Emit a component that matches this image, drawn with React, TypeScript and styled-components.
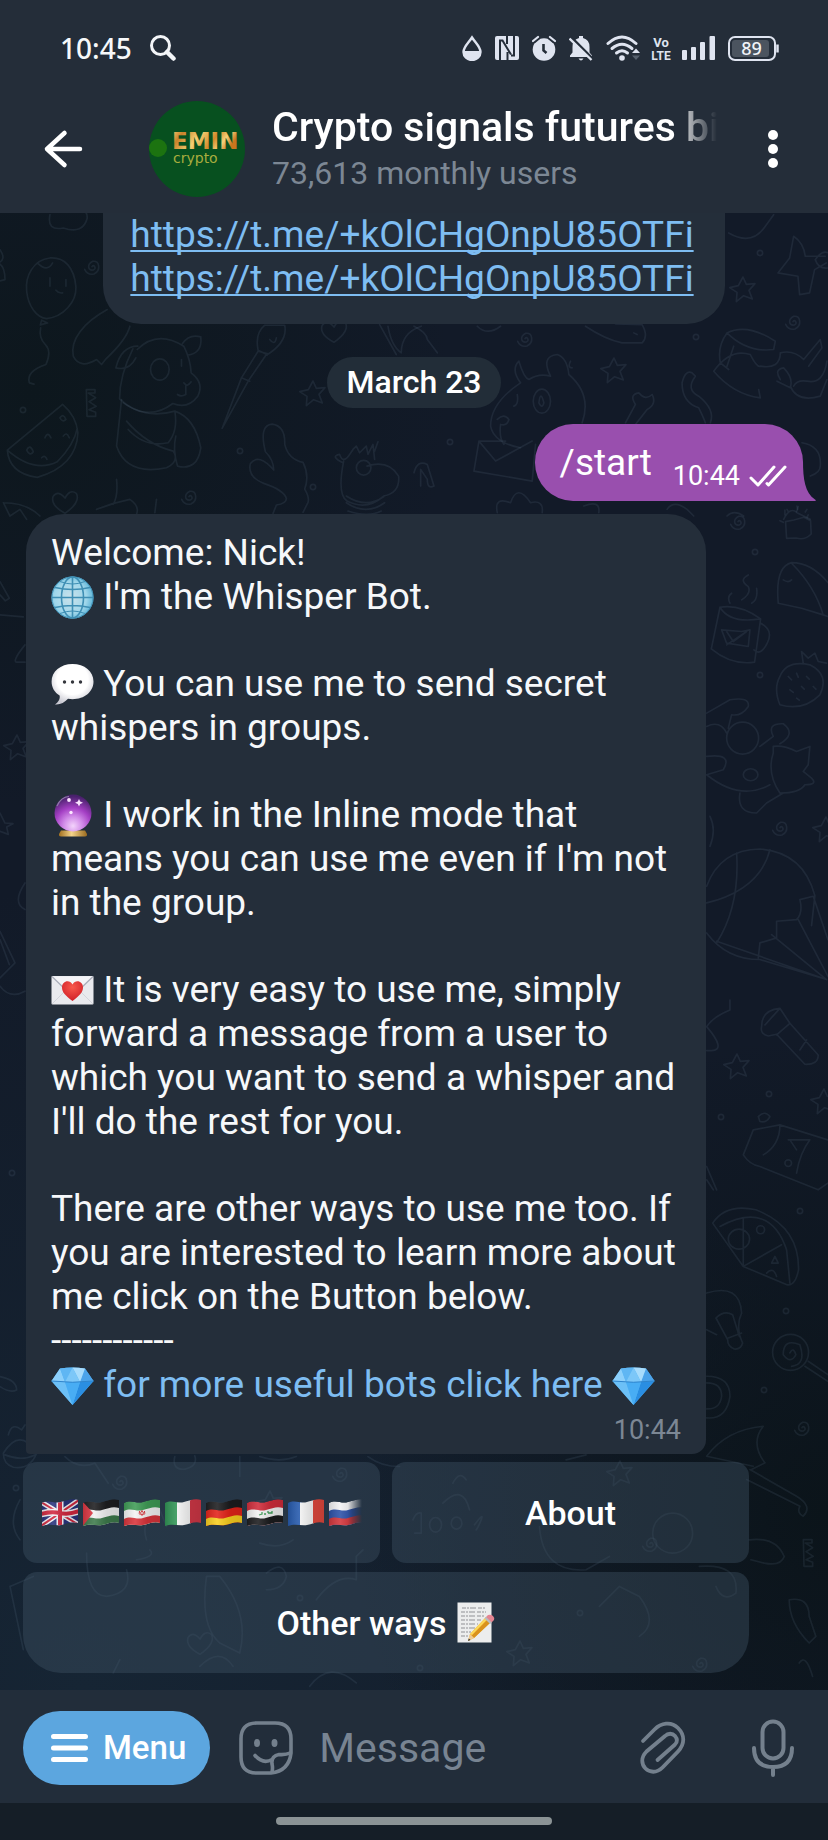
import React from "react";
import styled, { createGlobalStyle } from "styled-components";

const GlobalStyle = createGlobalStyle`
  *, *::before, *::after { box-sizing: border-box; }
  html, body { margin: 0; padding: 0; background: #151e27; }
  body { font-family: Roboto, "Noto Sans", sans-serif; color: #f6f8fa; }
  button { font-family: inherit; color: inherit; border: 0; margin: 0; padding: 0; background: none; cursor: pointer; }
  svg { display: block; flex: none; }
`;

const bar = "#242d39";
const bubble = "#242e3a";
const linkBlue = "#7ebdf2";
const muted = "#7c8794";

const Screen = styled.div`
  min-height: 100vh;
  display: flex;
  flex-direction: column;
`;

/* ---------- status bar and header ---------- */

const StatusBar = styled.div`
  display: flex;
  align-items: center;
  justify-content: space-between;
  height: 96px;
  padding: 0 49px 0 60px;
  background: ${bar};
`;

const StatusGroup = styled.div<{ $gap: number }>`
  display: flex;
  align-items: center;
  gap: ${(p) => p.$gap}px;
`;

const Clock = styled.time`
  font: 500 28px/32px "Noto Sans", sans-serif;
`;

const Header = styled.header`
  display: flex;
  align-items: center;
  height: 117px;
  padding: 0 48px 12px 40px;
  background: ${bar};
`;

const IconButton = styled.button`
  display: flex;
  align-items: center;
  justify-content: center;
  flex: none;
`;

const Avatar = styled.div`
  margin: 0 26px 0 60px;
`;

const Titles = styled.div`
  flex: 1;
  min-width: 0;
  padding-top: 2px;
`;

const Title = styled.h1`
  margin: 0;
  font-size: 41px;
  line-height: 46px;
  font-weight: 500;
  color: #fff;
  white-space: nowrap;
  overflow: hidden;
  mask-image: linear-gradient(to right, #000 calc(100% - 44px), transparent);
`;

const Subtitle = styled.p`
  margin: 0;
  font-size: 32px;
  line-height: 46px;
  color: ${muted};
`;

const MoreSlot = styled.div`
  display: flex;
  margin-left: 49px;
`;

/* ---------- chat ---------- */

const Chat = styled.main`
  position: relative;
  flex: 1;
  display: flex;
  flex-direction: column;
  overflow: hidden;
  background:
    radial-gradient(circle at 100% 88%, #0b141a 0, rgba(11, 20, 26, 0) 480px),
    radial-gradient(circle at 4% 12%, #0d171d 0, rgba(13, 23, 29, 0) 420px),
    radial-gradient(circle at 10% 100%, #162534 0, rgba(22, 37, 52, 0) 800px),
    #121a28;
`;

const Wallpaper = styled.svg`
  position: absolute;
  inset: 0;
  width: 100%;
  height: 100%;
`;

const Feed = styled.div`
  position: relative;
  display: flex;
  flex-direction: column;
  padding-bottom: 16px;
`;

const LinksBubble = styled.div`
  align-self: center;
  display: flex;
  flex-direction: column;
  padding: 0 31px 23px 27px;
  border-radius: 0 0 38px 38px;
  background: ${bubble};
`;

const UrlLink = styled.a`
  font-size: 37px;
  line-height: 44px;
  color: ${linkBlue};
  text-decoration-thickness: 2px;
  text-underline-offset: 3px;
  text-decoration-skip-ink: none;
`;

const DateChip = styled.div`
  align-self: center;
  margin: 33px 0 16px;
  padding: 0 19px;
  border-radius: 26px;
  background: #222d38;
  font-size: 32px;
  line-height: 51px;
  font-weight: 500;
  color: #fff;
`;

const Outgoing = styled.div`
  position: relative;
  align-self: flex-end;
  display: flex;
  align-items: center;
  height: 77px;
  margin: 0 25px 13px 0;
  padding: 0 16px 0 25px;
  border-radius: 38px 38px 0 38px;
  background: #994fae;
  color: #fff;
`;

const OutgoingText = styled.span`
  font-size: 37px;
  line-height: 44px;
`;

const Tail = styled.svg`
  position: absolute;
  left: 100%;
  bottom: 0;
`;

const SentTime = styled.span`
  display: flex;
  align-items: center;
  gap: 9px;
  margin: 26px 0 0 21px;
  font-size: 27px;
  line-height: 34px;
`;

const Incoming = styled.article`
  width: calc(100% - 148px);
  margin: 0 0 8px 26px;
  padding: 17px 25px 7px;
  border-radius: 38px 38px 14px 4px;
  background: ${bubble};
`;

const Paragraph = styled.p`
  margin: 0;
  font-size: 37px;
  line-height: 44px;
  & + & { margin-top: 43px; }
`;

const BotLink = styled.a`
  color: ${linkBlue};
  text-decoration: none;
`;

const ReceivedTime = styled.time`
  display: block;
  margin-top: 6px;
  text-align: right;
  font-size: 27px;
  line-height: 34px;
  color: ${muted};
`;

const Keyboard = styled.div`
  display: grid;
  grid-template-columns: 1fr 1fr;
  gap: 9px 12px;
  margin: 0 79px 0 23px;
`;

const KeyButton = styled.button<{ $wide?: boolean }>`
  display: flex;
  align-items: center;
  justify-content: center;
  gap: 11px;
  min-width: 0;
  height: 101px;
  grid-column: ${(p) => (p.$wide ? "1 / -1" : "auto")};
  border-radius: ${(p) => (p.$wide ? "14px 14px 38px 38px" : "14px")};
  background: rgba(66, 86, 102, 0.4);
  font-size: 34px;
  line-height: 44px;
  font-weight: 500;
  color: #fff;
`;

const Flags = styled.span`
  display: flex;
  width: 321px;
  overflow: hidden;
  mask-image: linear-gradient(to right, #000 calc(100% - 14px), transparent);
`;

/* ---------- composer ---------- */

const Composer = styled.form`
  display: flex;
  align-items: center;
  height: 113px;
  padding: 3px 30px 0 23px;
  background: #222d3a;
`;

const MenuButton = styled.button`
  display: flex;
  align-items: center;
  gap: 15px;
  height: 74px;
  margin-right: 29px;
  padding: 0 24px 0 28px;
  border-radius: 37px;
  background: #5ca6df;
  font-size: 33px;
  line-height: 44px;
  font-weight: 500;
  color: #fff;
`;

const MessageInput = styled.input`
  flex: 1;
  min-width: 0;
  height: 60px;
  margin: 0 20px 0 26px;
  padding: 0;
  border: 0;
  outline: 0;
  background: transparent;
  font: 400 41px/48px Roboto, sans-serif;
  color: #fff;
  &::placeholder { color: #788492; opacity: 1; }
`;

const MicSlot = styled.div`
  display: flex;
  margin-left: 57px;
`;

const NavBar = styled.footer`
  display: flex;
  justify-content: center;
  height: 37px;
  padding-top: 14px;
  background: #151e27;
`;

const NavPill = styled.div`
  width: 33.4%;
  height: 8px;
  border-radius: 4px;
  background: #8b9395;
`;

/* ---------- emoji ---------- */

const InlineEmoji = styled.svg`
  display: inline-block;
  width: 43px;
  height: 43px;
  vertical-align: -10px;
`;

const Globe = () => (
  <InlineEmoji viewBox="0 0 43 43" role="img" aria-label="Globe">
    <defs>
      <radialGradient id="globe" cx="45%" cy="50%" r="55%">
        <stop offset="0" stopColor="#cbe2ea" />
        <stop offset="0.7" stopColor="#9fd6ea" />
        <stop offset="1" stopColor="#5fb5d8" />
      </radialGradient>
    </defs>
    <circle cx="21.5" cy="21.5" r="21" fill="url(#globe)" />
    <g fill="none" stroke="#3f8fb4" strokeWidth="1.6">
      <circle cx="21.5" cy="21.5" r="20.6" strokeWidth="1" />
      <path d="M21.5 1v41M1 21.5h41M4 11.5q17.500 4 35 0M4 31.500q17.500-4 35 0" />
      <ellipse cx="21.500" cy="21.500" rx="11" ry="20.500" />
      <path d="M9 5.500q12.500 5 25 0M9 37.500q12.500-5 25 0" strokeWidth="1" />
    </g>
  </InlineEmoji>
);

const SpeechBalloon = () => (
  <InlineEmoji viewBox="0 0 43 43" role="img" aria-label="Speech balloon">
    <defs>
      <radialGradient id="balloon" cx="50%" cy="38%" r="62%">
        <stop offset="0.6" stopColor="#fff" />
        <stop offset="1" stopColor="#c9c9d2" />
      </radialGradient>
    </defs>
    <path d="M21.500 1C9.500 1 .6 8.500.6 18.500c0 6 3 11 8 14 .8 3-1 6.500-4.600 9 5 .6 9.500-2 13-5.700 1.500.3 3 .4 4.500.4 12 0 21-7.500 21-17.700S33.500 1 21.500 1z" fill="url(#balloon)" />
    <g fill="#34363c">
      <circle cx="13.500" cy="19" r="1.700" />
      <circle cx="21.500" cy="19" r="1.700" />
      <circle cx="29.500" cy="19" r="1.700" />
    </g>
  </InlineEmoji>
);

const CrystalBall = () => (
  <InlineEmoji viewBox="0 0 43 43" role="img" aria-label="Crystal ball">
    <defs>
      <radialGradient id="ball" cx="50%" cy="85%" r="85%">
        <stop offset="0" stopColor="#f3d3fb" />
        <stop offset="0.300" stopColor="#d18be8" />
        <stop offset="0.580" stopColor="#a43fc4" />
        <stop offset="0.950" stopColor="#48206b" />
      </radialGradient>
      <linearGradient id="ballBase" x1="0" x2="1" y1="0" y2="0">
        <stop offset="0" stopColor="#a3701f" />
        <stop offset="0.450" stopColor="#f4d48a" />
        <stop offset="1" stopColor="#9a6a1e" />
      </linearGradient>
    </defs>
    <path d="M10 36.500h24l2 3.500q.3 2.500-2 2.500H10q-2.300 0-2-2.500z" fill="url(#ballBase)" />
    <circle cx="22" cy="19" r="18.500" fill="url(#ball)" />
    <path d="M6 12Q10 3 18 2.500" fill="none" stroke="#8f7ba8" strokeWidth="1.200" />
    <g fill="#fbe6ff">
      <path d="M28 5l1.200 2.600L32 8.800l-2.800 1.200L28 12.600l-1.200-2.600L24 8.800l2.800-1.200z" />
      <circle cx="18" cy="6" r="1.900" />
      <circle cx="20" cy="18.500" r="1.700" />
    </g>
  </InlineEmoji>
);

const LoveLetter = () => (
  <InlineEmoji viewBox="0 0 43 43" role="img" aria-label="Love letter">
    <defs>
      <radialGradient id="heart" cx="50%" cy="30%" r="70%">
        <stop offset="0" stopColor="#f8584c" />
        <stop offset="1" stopColor="#d01f28" />
      </radialGradient>
    </defs>
    <rect x=".5" y="7" width="42" height="28.500" rx="1" fill="#e9eaee" />
    <path d="M1 35L16 20M42 35L27 20" stroke="#d3d5dc" />
    <path d="M1 7.500L18 24q3.500 3 7 0L42 7.500" fill="#f4f4f7" stroke="#a9adb9" strokeWidth="1.200" />
    <path d="M21.500 32C15 27 11 23.500 11 18.500c0-6.500 7.500-8.500 10.500-3 3-5.500 10.500-3.500 10.500 3 0 5-4 8.500-10.500 13.500z" fill="url(#heart)" />
  </InlineEmoji>
);

const Gem = () => (
  <InlineEmoji viewBox="0 0 43 43" role="img" aria-label="Gem">
    <path d="M9 4.500Q21.500 2.500 34 4.500L42.500 17 21.500 41 .5 17z" fill="#55b4f4" />
    <path d="M9 4.500L14 18 .5 17z" fill="#8dd0fb" />
    <path d="M34 4.500L29 18l13.500-1z" fill="#4ba3ea" />
    <path d="M9 4.500q6.500-1 12.500-1L14 18z" fill="#5fb6f3" />
    <path d="M34 4.500q-6.500-1-12.500-1L29 18z" fill="#a8dcfc" />
    <path d="M21.500 3.500L14 18h15z" fill="#7cc7f8" />
    <path d="M.5 17L14 18l7.500 23z" fill="#6cc0f7" />
    <path d="M42.500 17L29 18l-7.500 23z" fill="#2a8ee2" />
    <path d="M14 18h15l-7.500 23z" fill="#48adf4" />
    <path d="M.5 17q21 2.500 42 0" fill="none" stroke="#2f84cc" />
  </InlineEmoji>
);

const Memo = () => (
  <svg width="38" height="42" viewBox="0 0 38 42" role="img" aria-label="Memo">
    <rect x=".5" y=".5" width="34" height="40" fill="#eceded" />
    <path
      d="M5 6h23M4 10h25M4 14h24M4 18h20M4 22h17M4 26h14M4 30h10M4 34h8"
      stroke="#8f9296"
      strokeWidth="1.200"
      strokeDasharray="4 1 2 1 6 2"
    />
    <path d="M11 39l2-7L29 15l5 5-17 16z" fill="#f4b92c" />
    <path d="M14.500 33.500L31 17l3 3-17 16z" fill="#d9921d" />
    <path d="M13.500 31.500L29.500 15l1.500 1.500L15 33z" fill="#fbd85c" />
    <path d="M11 39l2-7 4 4z" fill="#eecb95" />
    <path d="M11 39l.8-2.600 1.700 1.700z" fill="#333" />
    <path d="M28.500 15.500l2.500-2.500q3-1 5 1t1 4l-2.500 2.500z" fill="#e58592" />
    <path d="M27.500 16.500l1.600-1.600 5.600 5.600-1.600 1.600z" fill="#b9bcc0" />
  </svg>
);

/* ---------- flags ---------- */

const edge = (y: number) => `M1 ${y + 3} C8 ${y - 1} 13 ${y + 4} 20 ${y + 2} S31 ${y - 2} 37 ${y}`;
const outline = `${edge(2)} V25 C31 23 26 26 20 27 S8 25 1 28 Z`;

type FlagProps = { id: string; name: string; children: React.ReactNode };

const Flag = ({ id, name, children }: FlagProps) => (
  <svg width="41" height="30" viewBox="0 0 41 30" role="img" aria-label={name}>
    <defs>
      <clipPath id={`flag-${id}`}>
        <path d={outline} />
      </clipPath>
      <linearGradient id={`shade-${id}`}>
        <stop offset="0" stopColor="#000" stopOpacity="0.150" />
        <stop offset="0.300" stopColor="#fff" stopOpacity="0.120" />
        <stop offset="0.600" stopColor="#000" stopOpacity="0.100" />
        <stop offset="1" stopColor="#000" stopOpacity="0.150" />
      </linearGradient>
    </defs>
    <g clipPath={`url(#flag-${id})`}>
      {children}
      <rect width="41" height="30" fill={`url(#shade-${id})`} />
    </g>
  </svg>
);

const Stripes = ({ colors }: { colors: string[] }) => (
  <>
    {colors.map((c, i) => (
      <path key={i} d={`${edge(2 + i * 8)} V30 H1 Z`} fill={c} />
    ))}
  </>
);

const Bands = ({ colors }: { colors: string[] }) => (
  <>
    {colors.map((c, i) => (
      <rect key={i} x={i * 13} width="15" height="30" fill={c} />
    ))}
  </>
);

const FlagRow = () => (
  <Flags>
    <Flag id="gb" name="United Kingdom">
      <rect width="41" height="30" fill="#28337c" />
      <path d="M0 4L38 27M0 28L38 2" stroke="#f2f2f6" strokeWidth="5" />
      <path d="M0 4L38 27M0 28L38 2" stroke="#d2283f" strokeWidth="2" />
      <path d="M19 0v30M0 16q10-3 19-1t19-2" fill="none" stroke="#f2f2f6" strokeWidth="7" />
      <path d="M19 0v30M0 16q10-3 19-1t19-2" fill="none" stroke="#d2283f" strokeWidth="4" />
    </Flag>
    <Flag id="ps" name="Palestine">
      <Stripes colors={["#1d1d1f", "#f1f1f1", "#3d7a4b"]} />
      <path d="M0 3l11 12L0 29z" fill="#dc3541" />
    </Flag>
    <Flag id="ir" name="Iran">
      <Stripes colors={["#3f9c56", "#f4f4f4", "#d8333a"]} />
      <path d="M19 12.500q3 2.500 0 5-3-2.500 0-5zM16.500 13q-1 3 1 4M21.500 13q1 3-1 4" fill="none" stroke="#d8333a" />
    </Flag>
    <Flag id="it" name="Italy">
      <Bands colors={["#2f9454", "#f4f4f4", "#cf3746"]} />
    </Flag>
    <Flag id="de" name="Germany">
      <Stripes colors={["#1c1c1e", "#e32219", "#f9cf1f"]} />
    </Flag>
    <Flag id="iq" name="Iraq">
      <Stripes colors={["#cf2c3a", "#f2f2f2", "#1b1b1d"]} />
      <path d="M13 17l3-1v-2M18 16h2M22 15v-2M22 15h4v-2" fill="none" stroke="#3f9c56" strokeWidth="1.300" />
    </Flag>
    <Flag id="fr" name="France">
      <Bands colors={["#2459ad", "#f4f4f4", "#e0483d"]} />
    </Flag>
    <Flag id="ru" name="Russia">
      <Stripes colors={["#f2f2f4", "#2b50a8", "#d3343a"]} />
    </Flag>
  </Flags>
);

/* ---------- status icons ---------- */

const ink = "#dfe4f0";

const StatusIcons = () => (
  <StatusGroup $gap={13}>
    <svg width="20" height="26" viewBox="0 0 20 26">
      <path d="M10 2.500C6.500 8 1.500 12 1.500 17a8.500 8 0 0 0 17 0c0-5-5-9-8.500-14.500z" fill="none" stroke={ink} strokeWidth="2.400" />
      <path d="M1.500 16h17c.5 5.500-3.500 9-8.500 9s-9-3.500-8.500-9z" fill={ink} />
    </svg>
    <svg width="24" height="24" viewBox="0 0 24 24">
      <rect width="24" height="24" rx="2" fill={ink} />
      <path d="M5 24V5M4 4.500h3.500l8.500 14M19 0v19M20 19.500h-4M12 0v8M12.500 24v-8" fill="none" stroke={bar} strokeWidth="2" />
    </svg>
    <svg width="24" height="26" viewBox="0 0 24 26">
      <circle cx="12" cy="14.500" r="11.300" fill={ink} />
      <path d="M1 6.500L6.500 2M23 6.500L17.500 2" stroke={bar} strokeWidth="5" />
      <path d="M1 6L6 2M23 6L18 2" stroke={ink} strokeWidth="2.200" strokeLinecap="round" />
      <path d="M11.500 9v6.500l3 2.500" fill="none" stroke={bar} strokeWidth="2.600" />
    </svg>
    <svg width="24" height="26" viewBox="0 0 24 26">
      <path d="M1 22v-1.500l2.500-3V12q0-7.500 6.500-9V1h4v2q6.500 1.500 6.500 9v5.500l2.500 3V22z" fill={ink} />
      <path d="M9.500 23.500h5q-2.500 4-5 0z" fill={ink} />
      <path d="M1.500 1.500L24.500 24.500" stroke={bar} strokeWidth="2.600" />
      <path d="M.5 3.500L22.500 25" stroke={ink} strokeWidth="2.400" />
    </svg>
    <svg width="34" height="26" viewBox="0 0 34 26">
      <g fill="none" stroke={ink} strokeWidth="3" strokeLinecap="round">
        <path d="M2 8.500Q16 -4.500 30 8.500" />
        <path d="M6 13.500q10-8.500 20 0" />
        <path d="M10.500 18q5.500-4.500 11 0" />
      </g>
      <circle cx="16" cy="23" r="2.800" fill={ink} />
      <path d="M26 18l4-4.500 4 4.500z" fill={ink} />
      <path d="M26 20.500l4 4.500 4-4.500z" fill="#56606d" />
    </svg>
    <svg width="16" height="26" viewBox="0 0 16 26" overflow="visible" fill={ink}>
      <text x="8" y="12" textAnchor="middle" fontFamily="Liberation Sans Narrow, Roboto, sans-serif" fontWeight="700" fontSize="13">Vo</text>
      <text x="8" y="25" textAnchor="middle" fontFamily="Liberation Sans Narrow, Roboto, sans-serif" fontWeight="700" fontSize="12">LTE</text>
    </svg>
    <svg width="33" height="24" viewBox="0 0 33 24" fill={ink}>
      <rect y="14" width="5" height="10" rx="1" />
      <rect x="9" y="11" width="5" height="13" rx="1" />
      <rect x="18" y="6" width="5" height="18" rx="1" />
      <rect x="27.500" width="5.500" height="24" rx="1" />
    </svg>
    <svg width="51" height="25" viewBox="0 0 51 25">
      <rect x="1" y="1" width="46" height="23" rx="6" fill="none" stroke={ink} strokeWidth="2" />
      <rect x="4" y="4" width="37" height="17" rx="3" fill="#4b545f" />
      <path d="M49.500 8.500v8" stroke={ink} strokeWidth="2.500" />
      <text x="23.500" y="18.500" textAnchor="middle" fontFamily="Noto Sans, sans-serif" fontWeight="500" fontSize="18" fill="#f0f3f8">89</text>
    </svg>
  </StatusGroup>
);

/* ---------- wallpaper doodles ---------- */

const SWIRL = "M0 2q4-6 8 0t-4 10q-12 2-14-8T2-14q16-2 18 14T6 24Q-14 28-22 10";
const STAR = "M0-36l10 22 26-2-18 20 10 26-26-10-22 18 2-28-22-14 26-6z";
const RING = "M-8 0a8 8 0 1 0 16 0a8 8 0 1 0-16 0";
const HEART = "M0 34Q-44 10-36-16-22-38 0-12 14-40 34-26 48 0 0 34z";
const CANDY = "M-14-40h26v10h-20l22 14-20 12 22 14-22 10 20 8v12h-26z";

const scattered: [string, number, number][] = [
  [SWIRL, 92, 53], [HEART, 65, 289], [SWIRL, 189, 283], [RING, 240, 238], [RING, 23, 197], [CANDY, 91, 190],
  [STAR, 313, 180], [HEART, 334, 118], [RING, 313, 274], [SWIRL, 525, 125], [STAR, 743, 76], [STAR, 614, 157],
  [SWIRL, 793, 108], [RING, 760, 40], [RING, 696, 124], [RING, 450, 229], [SWIRL, 738, 308], [RING, 755, 339],
  [RING, 760, 462], [SWIRL, 780, 614], [STAR, 826, 616], [STAR, 737, 853], [RING, 769, 881], [RING, 721, 904],
  [STAR, 824, 888], [RING, 800, 998], [RING, 786, 1098], [RING, 764, 1177], [SWIRL, 802, 1214], [CANDY, 808, 1340],
  [STAR, 17, 534], [RING, 12, 960], [RING, 16, 1275],
  [SWIRL, 120, 1268], [STAR, 270, 1290], [RING, 300, 1385], [SWIRL, 650, 1330], [RING, 580, 1400],
  [STAR, 620, 1260], [SWIRL, 340, 1260], [HEART, 200, 1430], [STAR, 520, 1440], [RING, 420, 1455], [SWIRL, 700, 1450],
];

const Doodles = () => (
  <Wallpaper viewBox="0 0 828 1477" preserveAspectRatio="xMidYMin slice" aria-hidden="true">
    <g fill="none" stroke="#8ca5c0" strokeOpacity="0.110" strokeWidth="5" strokeLinejoin="round" strokeLinecap="round">
      {scattered.map(([d, x, y], i) => (
        <path key={i} d={d} transform={`translate(${x} ${y}) scale(0.333)`} />
      ))}
      {/* balloon, bear, watermelon, brush and giraffe */}
      <g transform="scale(0.333)">
        <path d="M150 135C100 140 75 190 80 235c5 45 30 80 60 82 50-5 90-50 88-95-5-60-35-90-78-87zM112 150q30 30 46 0M150 195v25M198 200v20M168 232q8 10 20 8M125 322l-4 14 22-6zM122 345q-6 30 14 50t2 60q-60 20-50 55l14 4" />
        <path d="M150 5q-10 50 40 40 60 20 72-30 0-20-12-20" />
        <path d="M322 290C250 330 210 380 220 430q20 40 70 10l15 15 14-18Q380 380 390 340" />
        <path d="M412 410q60-60 140-10 20 40 22 80 40 30 20 70-30 40-75 22-80 60-160-14 0-70 40-150M414 400q-50 0-66 65 40 10 60-30M548 392q20-30 55-20 5 50-40 55" />
        <path d="M452 470a28 32 0 1 0 56 0a28 32 0 1 0-56 0M545 440v20M552 510q10 15 22-3M558 515v30q-15 8-25 0" />
        <path d="M365 560Q350 700 350 700 380 790 500 765q40-20 20-50-80-20-140-90M370 570q70 50 155 25 10 60-20 95-70 15-120-40M525 595q60 20 78 110-10 70-70 55-15-50-5-90" />
        <path d="M188 575L22 712q5 70 90 82Q230 760 234 660q-5-50-46-85zM22 712q80 70 150 35 50-50 60-100M80 712q10-20 20 5-10 15-20-5M135 675q8-20 18 0M180 615q10-15 18 5-10 10-18-5M190 670q10-15 18 5M125 735q10-10 16 5" />
        <path d="M775 415l-50 80-58 152 80-145 55-80zM775 412q-10-50 20-75h60q10 50-55 90M725 495l25 10M775 412l28 14M810 380q15 20 20-5" />
        <path d="M822 772q-45-52-70-20-10 40 40 60 60 20 68 45 0 15-30 20l-10 25M822 772q0-30-25-55-20-80 20-83 40 5 38 60 10 45 55 55 20 40 5 80 15 25 10 40l-15 30" />
        <path d="M1030 750q-40-20-10-25 10 30 30 0l10-15 10-10 10 20 20-20 5 25 15-30 5 45M1032 745q-20 100 10 120 60 30 110-15 50-10 45-60-30-50-95-30M1070 765a22 22 0 1 0 44 0a22 22 0 1 0-44 0M1040 850q60 40 115 0M1040 870q60 40 115 0M1045 895q60 20 100 0M1125 715l10-28" />
        <path d="M350 800q5 50-10 75M290 890q50-20 100-30 30 20 20 45M470 860l-5 40M10 870q70 0 110 40M10 870l20 40 30-20 20 30" />
        <path d="M0 110q20 30-5 40 20 10 20 50l-20 5M1140 335l50 90M1165 340q10 60 40 80 0-60 60-80" />
      </g>
      {/* moose, envelope, bone, snake and cat */}
      <g transform="translate(414 0) scale(0.333)">
        <path d="M320 510q-30-40-5-65 15 50 30 55 30-20 65-10-30-60 20-65 30 10 35 60 70 60 40 145M320 510q-90 60-90 130 10 50 90 65M358 565a26 36 0 1 0 52 0a26 36 0 1 0-52 0M375 570q5-40 15 0-5 20-15 0M310 545q5 30-10 35M250 620q20-20 35 0-5 20-25 15-5 40 10 60" />
        <path d="M195 685l-15 90 175 30 10-110M195 685l50 60 110-60M195 685h80" />
        <path d="M635 630l30-55q-20-30 10-35 20 25 40 5 15 30-15 45l-35 45M805 510q10-40 30-30l10 10q-30 40 10 60 50 40 35 80M805 510q0 60 50 75 15 30 20 45" />
        <path d="M940 360q60-30 145 25l-5 25q-80 10-140-50zM940 360q-30 40-20 90l25 20M960 400l-20 60M900 475q50-70 110-50 20 40 30 35 60 10 60-40 40-10 70 20l50-60 5 25-40 55M900 475q60 70 140 80l-5-25M1100 500q-20-30 10-35 30 30 20 60l-40-20M1140 520q10-20 40-15 50 10 60-60M1130 520q20 50 90 30l20-50" />
        <path d="M945 60q70 40 110-20l25-35M1140 70q30 20 35 60h60M1140 70l-12 65-35 45 60 10 5 55 30-5 15-70 35-20M1205 140q20-30 40-20M1205 140q10 30 40 25M190 340q30 30 70 0M515 340q60 40 110 50h60q20-20 0-55l-80-2M660 360l10 5M0 340q40 20 40 40l30 40" />
        <path d="M470 445q-10 20 5 20M0 780q10-40 40-25l20 65q-20 10-20-20l-20-30v50M1165 690q60 10 55 70 0 20-30 30M250 900q-10-50 40-30 20-60 60 0 40-10 35 30M510 880q50-20 45 20" />
        <path d="M1110 920q20-40 40-20l40 20M1120 890l5 8M1150 880l2 10M1180 890l-5 8M760 890q20-30 60 0l20 20M940 910q20-20 50 0" />
      </g>
      {/* mug, bird, strawberry, gymnast, parachute */}
      <g transform="translate(690 287) scale(0.333)">
        <path d="M90 322q60-10 122 35l-18 130q-70 10-130-40zM90 322q30 50 122 35M212 370q40 20 20 60-20 40-40 20M95 390l60 5 25-5-5 50-65-10zM110 395l20 30 40-30-60 40M120 310q-10-20 5-30M155 300q30-20 20-40-30-20 0-35M185 310q20-10 15-45" />
        <path d="M265 310q-10-110 40-122 60 0 109 60M305 190q70 70 95 155l14 5M265 310l70 15 65 20M280 240q15 10 25 0M290 115l-3-50 25-5 30-8 20 10 2 40q-20 20-45 12zM285 45v-15M320 35l5-15M350 55l5-10M270 62l10 5" />
        <path d="M270 530q20-50 90-35 60 30 30 90-50 50-120 30-20-50 0-85zM340 490l-5-35 20 20 20-15 10 25 25 5M295 530l10 10M320 520l5 12M350 530l8 8M300 570l10 8M335 560l8 8M370 560l8 8M320 595l8 6" />
        <path d="M50 640l70-40q60-10 55 20-20 30-50 25l-10 40M110 715a48 48 0 1 0 96 0a48 48 0 1 0-96 0M50 680q40-20 60 20M50 770q80-10 50 40l-50 15q100 80 190 30M160 825a22 18 0 1 0 44 0a22 18 0 1 0-44 0M210 740l40-30q-20-40 30-38 40 30-10 60M250 760q-20 60 20 120 60 0 75-25 40 0 20-20l-25-20 15-20 5-55-40 15q-40-20-70-15zM150 880q-10 60 50 60l30-30 50-30" />
        <path d="M50 1160Q90 1050 210 1048q130 10 165 140l-10 90M50 1300q60 80 160 80l200 60M50 1210q160-40 190-160M140 1060q10 160-60 270M330 1200q10 40-10 60l-60 5v50l-50 15-5 45M330 1200l40-10 44 130M325 1260l89 170M245 1305l165 135M80 1325l330 115M60 950q20 40 0 90" />
      </g>
      {/* torch, map, pizza, bulb, lollipop and umbrella */}
      <g transform="translate(690 787) scale(0.333)">
        <path d="M215 80q0-50 55-55l30 45 85 95q0 30-40 28l-85-90-25 5q-25-5-20-28zM270 25l-45 50M300 70l-40 35M350 120l-20 30M50 80q20-30 70-50V0M50 80q60 70 15 72H50" />
        <path d="M190 390l-30 75q20 30 50 35l175 70 29-20M190 390l80-15 144 45M270 375q0 60-50 90M205 350q20-20 35 0-10 20-30 15zM295 420h65q-30 40-40 100M300 420l20 30M285 490a10 10 0 1 0 20 0a10 10 0 1 0-20 0M50 500l30 70M50 540l20 30" />
        <path d="M68 670q40-60 130-40 130 50 128 180-10 50-35 45L160 800zM90 680q150-80 200 70l10 100M115 718a32 30 0 1 0 64 0a32 30 0 1 0-64 0M160 655v145l115-65M200 690a12 12 0 1 0 24 0a12 12 0 1 0-24 0M245 790l10-20 10 20zM230 820q20-20 30 10" />
        <path d="M50 880q100-30 105 60-15 30-5 70l8 20q-5 20-25 18-20-8-20-28L78 955q25-25 50-10l20 65M50 990l30 15M115 1015l40-15M248 1058a54 54 0 1 0 108 0a54 54 0 1 0-108 0M300 1060q10-20 18 5-15 30-38 0 0-50 50-30 20 60-25 65M355 1085l59 40M345 1100l69 45M50 1130q70 0 70 60-10 70-70 65M50 1150q45 0 45 40-5 40-45 38" />
        <path d="M50 1370q60-80 170-90-40 50 5 110l-40 20M50 1370l140 30M180 1410l140 80q50 30 20 60-20-10-10-30L170 1440" />
      </g>
      {/* pencil, card, umbrella handle and leaves along the left edge */}
      <g transform="translate(0 307) scale(0.333)">
        <path d="M0 185l28 50-12 8L0 225M0 285l70 6M75 375q-40 50-25 52h25M0 880q10 20 15 30l24 2-19 10 5 22-25-9M75 1090q-40 60 0 80M0 1235l45 95-45 45M0 1260l28 75M0 1400q30 40 75 15" />
      </g>
      {/* apple, flowers and submarine behind the keyboard */}
      <g transform="translate(0 1127) scale(0.333)">
        <path d="M0 110q50 10 50 40-20 10-50-10M25 285q10-40 40-15l10-15M10 340q50-80 100 0-20 50-70 42-30-10-30-42zM15 345q50 20 90 0" />
        <path d="M195 350q40 40 90 20l40 60M525 350q-10 40 30 38 40-10 30-40M780 350q60 20 110 0M720 350v60M1105 350q40 30 95 30M60 480q-40 70 0 120M260 640q0 130 60 130 80-10 60-80M410 660q60-10 40-30M620 710q-20 150 40 200l60 30q30-120-60-230zM800 700q50-40 60 10-10 40-60 40" />
        <path d="M30 740l70-30M30 740l40 190M950 780q60-80 120-60V650l20-20M440 600q-20-60 40-90l20 50M780 610q60 20 100-10" />
        <path d="M1240 540q10-25 25-20v60h-20M1290 555a18 22 0 1 0 36 0a18 22 0 1 0-36 0M1355 550a16 18 0 1 0 32 0a16 18 0 1 0-32 0M1425 555q30-40 20-15t-15 30M1330 490q60-60 80 20M1360 430q20-40 40-10M1620 560q10 140 140 130l70-40M1700 360l60-15M1960 580a60 60 0 1 0 120 0a60 60 0 1 0-120 0M2100 680q120-10 110 80-40 30-60-20M2250 600q80-10 105 50-10 30-60 20l-40-10M2370 780q60-10 60 50l20 60-20 20q-60-60-60-130zM2400 970q20-30 40 40M1800 800l60-60 60 30q60 80 0 120M340 1000l20-40M600 980q60-60 100 0M930 1040q60-80 140-10" />
      </g>
    </g>
  </Wallpaper>
);

export default function App() {
  const url = "https://t.me/+kOlCHgOnpU85OTFi";
  return (
    <Screen>
      <GlobalStyle />
      <StatusBar>
        <StatusGroup $gap={18}>
          <Clock>10:45</Clock>
          <svg width="26" height="26" viewBox="0 0 26 26" fill="none" stroke="#f3f5f8">
            <circle cx="10.500" cy="10.500" r="9" strokeWidth="3" />
            <path d="M17 17l6.500 6.500" strokeWidth="4.500" strokeLinecap="round" />
          </svg>
        </StatusGroup>
        <StatusIcons />
      </StatusBar>

      <Header>
        <IconButton aria-label="Back">
          <svg width="48" height="48" viewBox="0 0 48 48" fill="none" stroke="#fff" strokeWidth="4.500" strokeLinecap="round" strokeLinejoin="round">
            <path d="M40 24H7M24.500 8L7 24l17.500 16" />
          </svg>
        </IconButton>
        <Avatar>
          <svg width="98" height="98" viewBox="0 0 98 98" role="img" aria-label="Emin crypto">
            <defs>
              <linearGradient id="gold" x1="0" y1="0" x2="1" y2="0.300">
                <stop offset="0" stopColor="#f6d47c" />
                <stop offset="0.200" stopColor="#c9822a" />
                <stop offset="0.450" stopColor="#f3cf73" />
                <stop offset="0.700" stopColor="#d48a2b" />
                <stop offset="0.850" stopColor="#f4d27a" />
                <stop offset="1" stopColor="#c9761d" />
              </linearGradient>
            </defs>
            <circle cx="49" cy="49" r="48" fill="#07501f" />
            <circle cx="10" cy="48" r="9" fill="#1c7310" />
            <text x="24" y="49" fontFamily="DejaVu Sans, sans-serif" fontWeight="700" fontSize="23" fill="url(#gold)">EMIN</text>
            <text x="25" y="63" fontFamily="DejaVu Sans, sans-serif" fontSize="14" fill="#a9ad3e">crypto</text>
          </svg>
        </Avatar>
        <Titles>
          <Title>Crypto signals futures bi</Title>
          <Subtitle>73,613 monthly users</Subtitle>
        </Titles>
        <MoreSlot>
          <IconButton aria-label="More options">
            <svg width="14" height="44" viewBox="0 0 14 44" fill="#fff">
              <circle cx="7" cy="8" r="5" />
              <circle cx="7" cy="22" r="5" />
              <circle cx="7" cy="36" r="5" />
            </svg>
          </IconButton>
        </MoreSlot>
      </Header>

      <Chat>
        <Doodles />
        <Feed>
          <LinksBubble>
            <UrlLink href={url}>{url}</UrlLink>
            <UrlLink href={url}>{url}</UrlLink>
          </LinksBubble>

          <DateChip>March 23</DateChip>

          <Outgoing>
            <OutgoingText>/start</OutgoingText>
            <SentTime>
              10:44
              <svg width="38" height="22" viewBox="0 0 38 22" fill="none" stroke="#fff" strokeWidth="3" strokeLinecap="round" strokeLinejoin="round">
                <path d="M2 13l7 7L25 2M18 18.500l1.500 1.500L36 2" />
              </svg>
            </SentTime>
            <Tail width="13" height="40" viewBox="0 0 13 40">
              <path d="M-1 0H0C0 18 2 32 12 38.500Q14 40 11 40H-1z" fill="#994fae" />
            </Tail>
          </Outgoing>

          <Incoming>
            <Paragraph>
              Welcome: Nick!
              <br />
              <Globe /> I'm the Whisper Bot.
            </Paragraph>
            <Paragraph>
              <SpeechBalloon /> You can use me to send secret whispers in groups.
            </Paragraph>
            <Paragraph>
              <CrystalBall /> I work in the Inline mode that means you can use me even if I'm not in the group.
            </Paragraph>
            <Paragraph>
              <LoveLetter /> It is very easy to use me, simply forward a message from a user to which you want to send a
              whisper and I'll do the rest for you.
            </Paragraph>
            <Paragraph>
              There are other ways to use me too. If you are interested to learn more about me click on the Button
              below.
              <br />
              ------------
              <br />
              <BotLink href="https://t.me/">
                <Gem /> for more useful bots click here <Gem />
              </BotLink>
            </Paragraph>
            <ReceivedTime>10:44</ReceivedTime>
          </Incoming>

          <Keyboard>
            <KeyButton aria-label="Languages">
              <FlagRow />
            </KeyButton>
            <KeyButton>About</KeyButton>
            <KeyButton $wide>
              Other ways
              <Memo />
            </KeyButton>
          </Keyboard>
        </Feed>
      </Chat>

      <Composer onSubmit={(e) => e.preventDefault()}>
        <MenuButton type="button">
          <svg width="37" height="28" viewBox="0 0 37 28" stroke="#fff" strokeWidth="5" strokeLinecap="round">
            <path d="M2.500 2.500h32M2.500 14h32M2.500 25.500h32" />
          </svg>
          Menu
        </MenuButton>
        <IconButton type="button" aria-label="Stickers">
          <svg width="54" height="54" viewBox="0 0 54 54" fill="none" stroke="#74808d" strokeWidth="3.600" strokeLinecap="round" strokeLinejoin="round">
            <path d="M18 2h18q16 0 16 16v14Q50 50 32 52H18Q2 52 2 36V18Q2 2 18 2z" />
            <path d="M33 51q1-4 0-8-1-8 7-9.500 7 .5 11-1.500M16 34.500q8 9 17 4" />
            <g fill="#74808d" stroke="none">
              <ellipse cx="18" cy="22" rx="3" ry="4" />
              <ellipse cx="35.500" cy="22" rx="3" ry="4" />
            </g>
          </svg>
        </IconButton>
        <MessageInput aria-label="Message" placeholder="Message" />
        <IconButton type="button" aria-label="Attach file">
          <svg width="54" height="56" viewBox="0 0 54 56" fill="none" stroke="#74808d" strokeWidth="3.800" strokeLinecap="round">
            <path d="M6 21L17.500 9.500C24 3 34 1 41 8c7 7 7 16 0 23.500L25.500 47.500c-6 6-13 5-17 1-4-4-5-11 1-17L28 16c3-3 7.500-3 10 0 2.500 3 2.500 6 0 8.500L20.500 40" />
          </svg>
        </IconButton>
        <MicSlot>
          <IconButton type="button" aria-label="Record voice message">
            <svg width="50" height="58" viewBox="0 0 50 58" fill="none" stroke="#74808d" strokeWidth="4" strokeLinecap="round">
              <rect x="14.500" y="2.500" width="21" height="37" rx="10.500" />
              <path d="M6 29q0 19 19 19t19-19M25 48v8" />
            </svg>
          </IconButton>
        </MicSlot>
      </Composer>

      <NavBar>
        <NavPill />
      </NavBar>
    </Screen>
  );
}
